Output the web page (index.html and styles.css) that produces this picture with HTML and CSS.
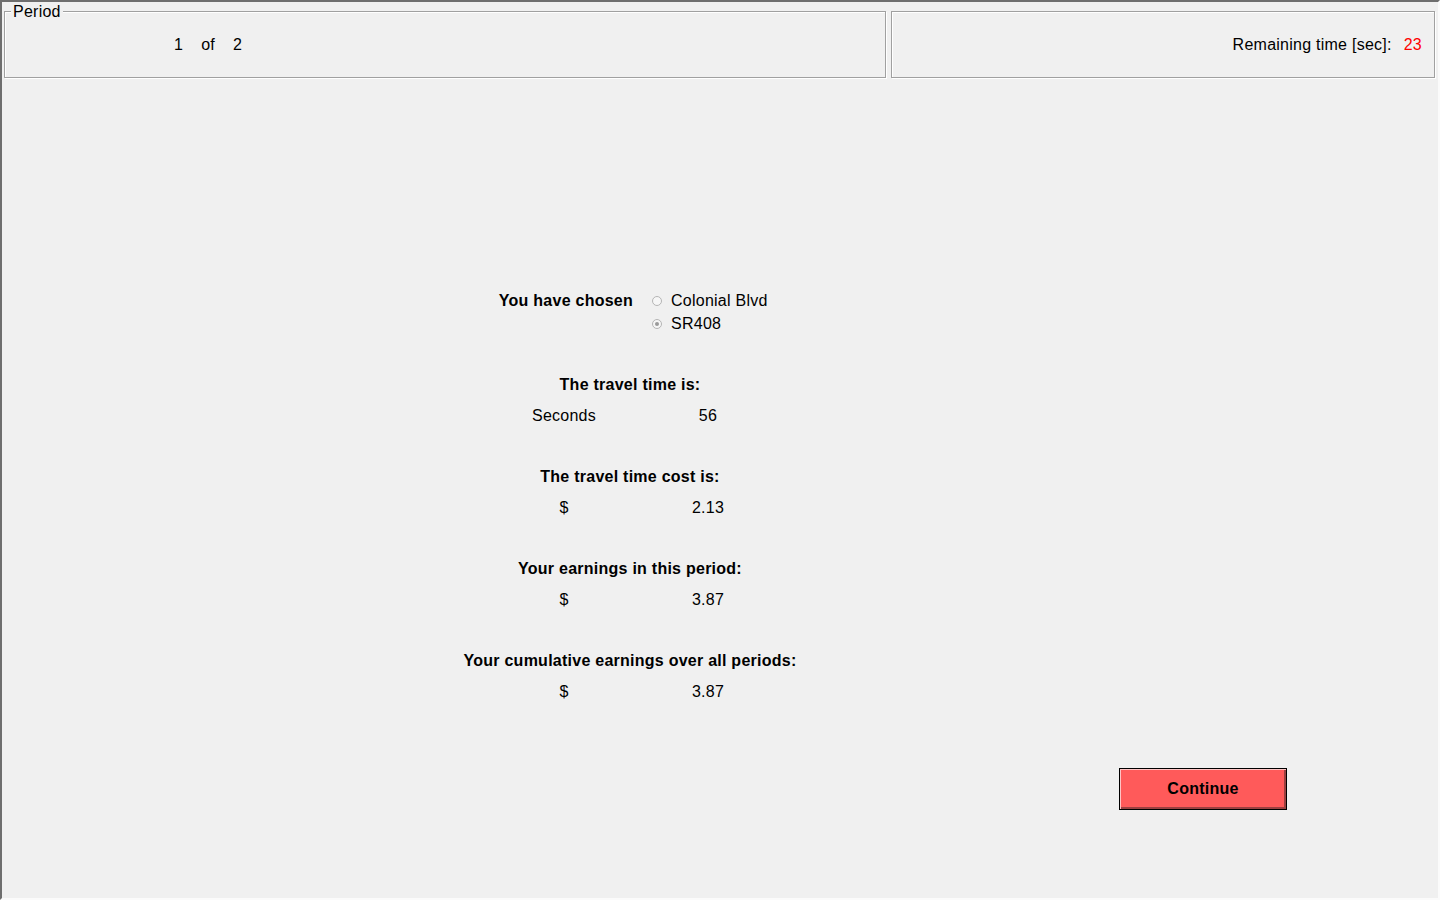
FILE: index.html
```html
<!DOCTYPE html>
<html lang="en">
<head>
    <meta charset="UTF-8">
    <title>Period result</title>
    <link rel="stylesheet" href="styles.css">
</head>
<body>
    <div class="window">
        <div class="top">
            <div class="box period">
                <span class="legend">Period</span>
                <span>1</span><span>of</span><span>2</span>
            </div>
            <div class="box timer">
                <span>Remaining time [sec]:</span><span class="time-left">23</span>
            </div>
        </div>

        <div class="panel">
            <div class="chosen">
                <div class="label">You have chosen</div>
                <div class="options">
                    <div class="option"><span class="radio"></span>Colonial Blvd</div>
                    <div class="option"><span class="radio checked"></span>SR408</div>
                </div>
            </div>

            <div class="section">
                <h2>The travel time is:</h2>
                <div class="values"><span>Seconds</span><span>56</span></div>
            </div>

            <div class="section">
                <h2>The travel time cost is:</h2>
                <div class="values"><span>$</span><span>2.13</span></div>
            </div>

            <div class="section">
                <h2>Your earnings in this period:</h2>
                <div class="values"><span>$</span><span>3.87</span></div>
            </div>

            <div class="section">
                <h2>Your cumulative earnings over all periods:</h2>
                <div class="values"><span>$</span><span>3.87</span></div>
            </div>
        </div>

        <div class="actions">
            <button class="continue">Continue</button>
        </div>
    </div>
</body>
</html>
```

FILE: styles.css
```css
body {
    margin: 0;
    background-color: #f0f0f0;
    font-family: "Liberation Sans", Arial, sans-serif;
    font-size: 16px;
    letter-spacing: 0.25px;
    color: #000;
}
.window {
    height: 900px;
    box-sizing: border-box;
    border-top: 2px solid #6e6e6e;
    border-left: 2px solid #6e6e6e;
    border-right: 2px solid #fbfbfb;
    border-bottom: 2px solid #fbfbfb;
}
.top {
    display: flex;
    gap: 5px;
    padding: 9px 0 0 2px;
}
.box {
    position: relative;
    height: 67px;
    box-sizing: border-box;
    border: 1px solid #a0a0a0;
    box-shadow: inset 1px 1px 0 #fff, 1px 1px 0 #fff;
    display: flex;
    align-items: center;
    padding-top: 1px;
}
.period {
    width: 882px;
    padding-left: 169px;
    gap: 18px;
}
.legend {
    position: absolute;
    top: -9px;
    left: 6px;
    padding: 0 2px;
    line-height: 18px;
    background-color: #f0f0f0;
}
.timer {
    width: 544px;
    justify-content: flex-end;
    padding-right: 12px;
    gap: 12px;
}
.time-left {
    color: #ff0000;
}
.panel {
    width: 360px;
    margin-left: 448px;
    padding-top: 211px;
    line-height: 23px;
}
.chosen {
    display: grid;
    grid-template-columns: 183px auto;
    column-gap: 19px;
}
.label {
    text-align: right;
    font-weight: bold;
}
.option {
    display: flex;
    align-items: center;
    gap: 9px;
}
.radio {
    position: relative;
    width: 8px;
    height: 8px;
    border: 1px solid #b5b5b5;
    border-radius: 50%;
    background-color: #f6f6f6;
}
.radio.checked::after {
    content: "";
    position: absolute;
    top: 2px;
    left: 2px;
    width: 4px;
    height: 4px;
    border-radius: 50%;
    background-color: #9a9a9a;
}
.section {
    margin-top: 38px;
}
.section h2 {
    margin: 0;
    font-size: 16px;
    text-align: center;
}
.values {
    display: grid;
    grid-template-columns: 144px 144px;
    margin: 8px 0 0 42px;
    text-align: center;
}
.actions {
    display: flex;
    justify-content: flex-end;
    padding-right: 151px;
    margin-top: 65px;
}
.continue {
    width: 168px;
    height: 42px;
    border: 1px solid #000;
    background-color: #ff5a5a;
    box-shadow: inset 1px 1px 0 #ffc4c4, inset -2px -2px 0 #9c4040;
    font-family: "Liberation Sans", Arial, sans-serif;
    font-size: 16px;
    font-weight: bold;
    letter-spacing: 0.25px;
    color: #000;
    padding: 0;
}
```
